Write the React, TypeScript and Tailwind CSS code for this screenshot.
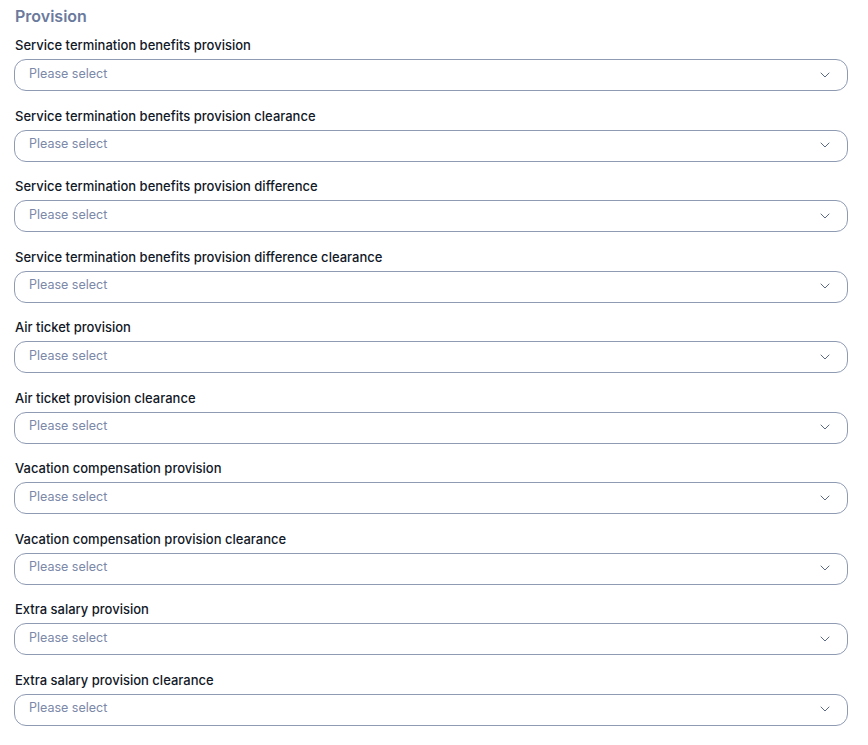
import { ChevronDown } from 'lucide-react';

const fields = [
  'Service termination benefits provision',
  'Service termination benefits provision clearance',
  'Service termination benefits provision difference',
  'Service termination benefits provision difference clearance',
  'Air ticket provision',
  'Air ticket provision clearance',
  'Vacation compensation provision',
  'Vacation compensation provision clearance',
  'Extra salary provision',
  'Extra salary provision clearance',
];

function SelectField({ label }: { label: string }) {
  return (
    <div className="flex flex-col">
      <label className="pl-px text-[13px] font-medium leading-5 text-[#111827]">{label}</label>
      <button
        type="button"
        className="mt-[4px] flex h-[32px] w-full items-center justify-between rounded-[12px] border border-[#8f9bb3] bg-white pb-[2px] pl-[14px] pr-[14px] text-left"
      >
        <span className="text-[12.5px] text-[#7b88a8]">Please select</span>
        <ChevronDown size={16} strokeWidth={1.25} className="mt-[1px] text-[#3b4a6b]" />
      </button>
    </div>
  );
}

export default function App() {
  return (
    <div className="min-h-screen bg-white pl-[14px] pr-[20px] pt-[6px] font-['Inter',sans-serif]">
      <h2 className="pl-px text-[16px] font-semibold leading-5 text-[#6b7a9c]">Provision</h2>
      <div className="mt-[9px] flex flex-col gap-[14.5px]">
        {fields.map((f) => (
          <SelectField key={f} label={f} />
        ))}
      </div>
    </div>
  );
}
